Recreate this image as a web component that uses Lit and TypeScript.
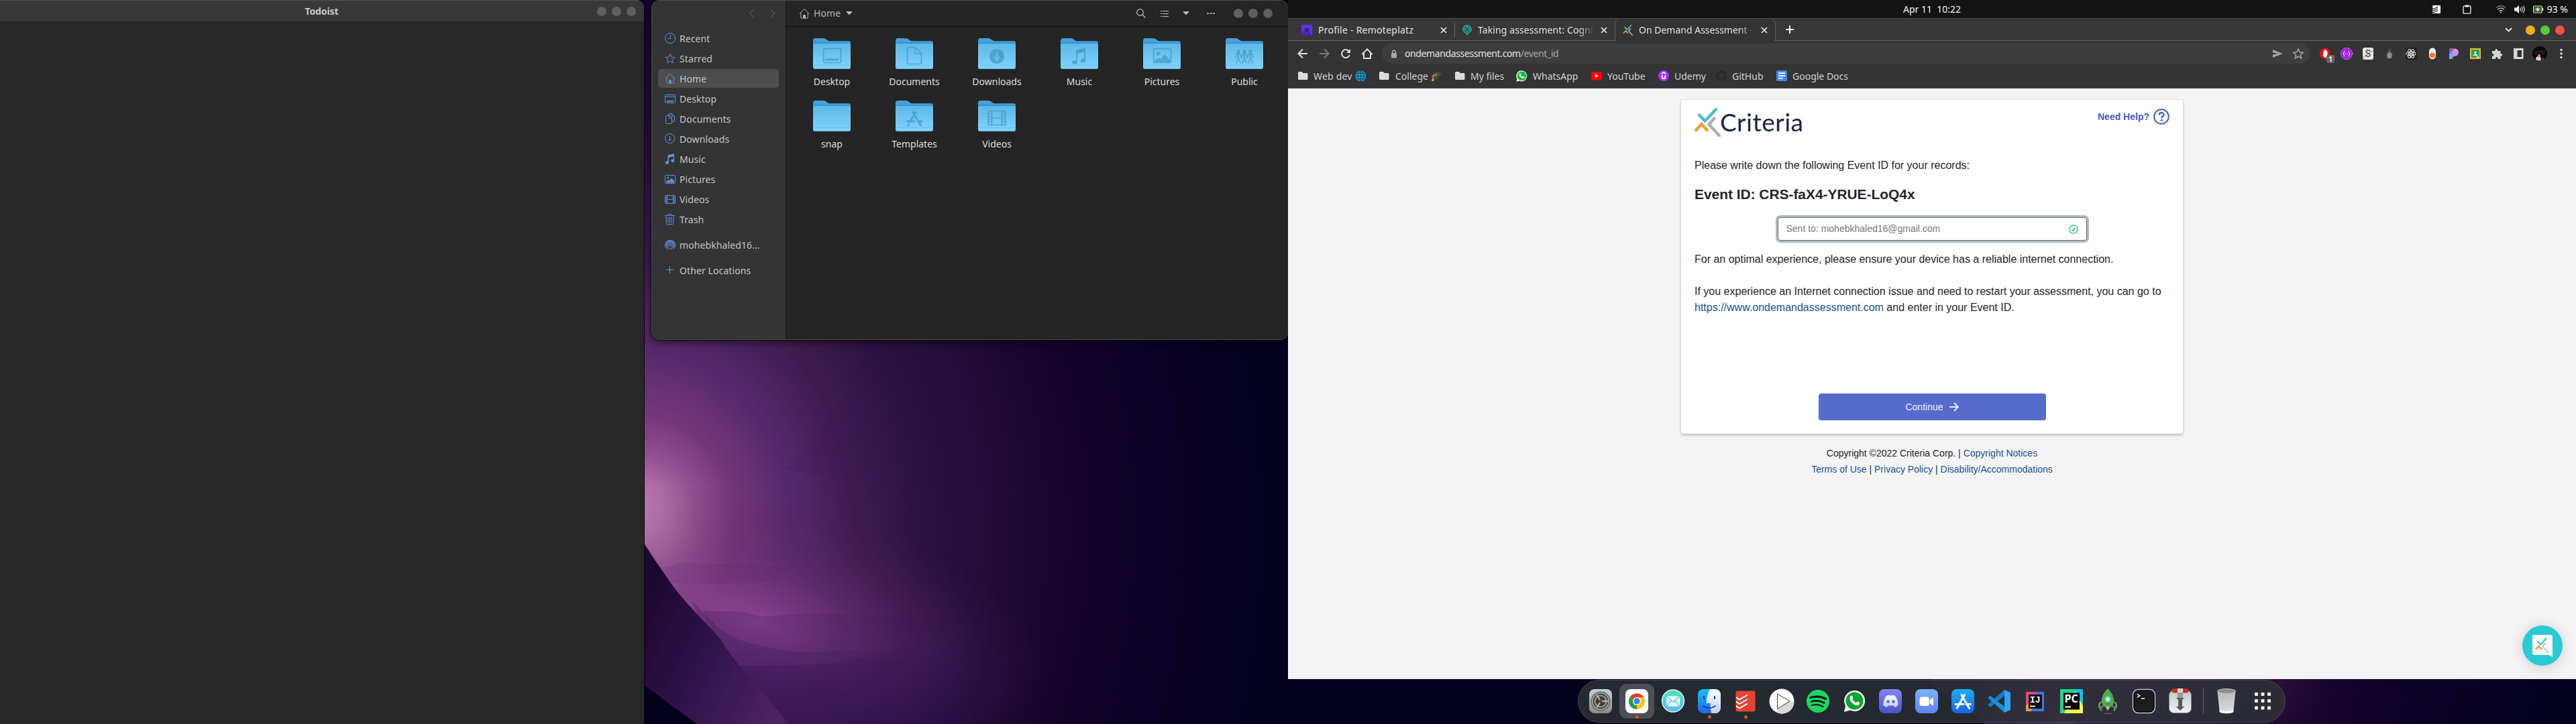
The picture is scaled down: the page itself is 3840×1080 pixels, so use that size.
import { LitElement, html, svg, css, nothing } from "lit";
import { customElement } from "lit/decorators.js";

const icon = (w: number, h: number, body: unknown, cls = "") =>
  html`<svg class="ic ${cls}" width=${w} height=${h} viewBox="0 0 ${w} ${h}" fill="none">${body}</svg>`;

const home16 = svg`<path d="M.8 8.6 8 1.3l7.2 7.3M2.8 7v7.2c0 .6.3.9.9.9h8.6c.6 0 .9-.3.9-.9V7" stroke="currentColor"/><path d="M6 15v-3.700C6 9.600 10 9.600 10 11.300V15z" fill="currentColor"/>`;

const places = [
  ["Recent", svg`<circle cx="8" cy="8" r="7.500" stroke="currentColor"/><path d="M8.500 3v5.500H4" stroke="currentColor"/>`],
  ["Starred", svg`<path d="m8 1.300 2 4.800 5 .4-3.800 3.300 1.300 5L8 12.100l-4.500 2.700 1.300-5L1 6.500l5-.4z" stroke="currentColor" stroke-linejoin="round"/>`],
  ["Home", home16],
  ["Desktop", svg`<rect x=".5" y="2.500" width="15" height="12" rx="1" stroke="currentColor"/><path d="M1 5.300h14" stroke="currentColor"/><path d="M3 12h10" stroke="currentColor" stroke-width="2"/>`],
  ["Documents", svg`<path d="M5.500 3.500v-1.500c0-.8.4-1.300 1.200-1.300h4l3.800 3.800v6.500c0 .8-.4 1.200-1.200 1.200h-2.300M10.500.7v4h4" stroke="currentColor"/><path d="M2.700 3.500h4.500l3.300 3.300v7.400c0 .8-.4 1.300-1.200 1.300H2.700c-.8 0-1.200-.5-1.200-1.300V4.800c0-.8.4-1.300 1.200-1.300zM6.800 3.500v3.700h3.700" stroke="currentColor"/>`],
  ["Downloads", svg`<circle cx="7.500" cy="7.500" r="7" stroke="currentColor"/><path d="M7.500 4v7M5 8.500 7.500 11 10 8.500" stroke="currentColor"/>`],
  ["Music", svg`<path d="M4.500 2.500 14 0v11.200a2.300 2.300 0 1 1-1.300-2.300V4.300L6 6v7.300a2.500 2.500 0 1 1-1.500-2.200z" fill="currentColor"/>`],
  ["Pictures", svg`<rect x=".5" y="2.500" width="15" height="12" rx="1" stroke="currentColor"/><circle cx="4.700" cy="6" r="1.400" fill="currentColor"/><path d="M2 13.500v-1.500l3-2.500 1.500 1 3.500-4 4 4.500v2.500z" fill="currentColor"/>`],
  ["Videos", svg`<rect x=".5" y="2.500" width="15" height="12" rx="1" stroke="currentColor"/><path d="M3.500 2.500v12M12.500 2.500v12M3.500 8.500h9M.5 5h3M.5 7.500h3M.5 10h3M.5 12.500h3M12.500 5h3M12.500 7.500h3M12.500 10h3M12.500 12.500h3" stroke="currentColor"/>`],
  ["Trash", svg`<path d="M0 2.500h15M5.500 2.500v-2h4v2M1.800 3l.5 11c0 .9.5 1.500 1.400 1.500h7.600c.9 0 1.400-.6 1.400-1.500l.5-11M5 5v8M7.500 5v8M10 5v8" stroke="currentColor"/>`],
] as const;

const glyph = "#2b86b3";
const folders: [string, unknown][] = [
  ["Desktop", svg`<rect x="15.500" y="15.500" width="26" height="21" rx="2.500"/><path d="M19 32h18" stroke-width="3"/>`],
  ["Documents", svg`<path d="M20 13.700h9.500l9 9V35.500a3 3 0 0 1-3 3H20a2.500 2.500 0 0 1-2.500-2.500V16.200a2.500 2.500 0 0 1 2.500-2.500zM29 14v6.500q0 2.500 2.500 2.500H38.500"/>`],
  ["Downloads", svg`<circle cx="28" cy="27" r="11" fill=${glyph} stroke="none"/><path d="M28 21v11M24 28.500l4 4 4-4" stroke="#74c8f4"/>`],
  ["Music", svg`<path d="M24 36V19l12-3v17" stroke-width="2"/><path d="M24 18l12-3v5l-12 3z" fill=${glyph} stroke="none"/><ellipse cx="21" cy="36" rx="4" ry="3" fill=${glyph} stroke="none"/><ellipse cx="33.500" cy="33.500" rx="4" ry="3" fill=${glyph} stroke="none"/>`],
  ["Pictures", svg`<rect x="15.500" y="15.500" width="26" height="21" rx="2.500"/><circle cx="22.500" cy="23" r="2.700" fill=${glyph} stroke="none"/><path d="M17 36v-3l6-4 3 2 6-7 9 9v3z" fill=${glyph} stroke="none"/>`],
  ["Public", svg`<g fill=${glyph} stroke="none"><circle cx="19" cy="19.500" r="2.500"/><circle cx="28" cy="19.500" r="2.500"/><circle cx="37" cy="19.500" r="2.500"/></g><path d="M19 22v7l-3 8M19 29l3 8M28 22v7l-3 8M28 29l3 8M37 22v7l-3 8M37 29l3 8M15 29l2-6h4l2.500 6 2.500-6h4l2.500 6 2.500-6h4l2 6" stroke-width="1.800"/>`],
  ["snap", nothing],
  ["Templates", svg`<path d="M30 17.500 21.500 32M26 17.500 37.500 37M17.500 31h11M33 31h6M20 35.500l-1 2" stroke-width="3"/>`],
  ["Videos", svg`<rect x="15" y="15.500" width="26" height="21" rx="2.500"/><path d="M20.500 15.500v21M35.500 15.500v21M20.500 26h15M15 19.500h5M15 23.500h5M15 27.500h5M15 31.500h5M36 19.500h5M36 23.500h5M36 27.500h5M36 31.500h5"/>`],
];

const mark = (w: number, h: number, gray = "#adafad") => html`<svg class="ic" width=${w} height=${h} viewBox="0 0 40 43" fill="none" stroke-linecap="round" stroke-width="4.400">
  <path d="M37 41.500 21.500 24.500 29.500 15.500" stroke=${gray}/>
  <path d="M7 10.500 15.500 19.500 32 2" stroke="#4cc0c4"/>
  <path d="M2.300 33 10.500 24 18.500 33" stroke="#f09c33"/></svg>`;

const wa = (bg: string, rim: string, size: number) => html`<svg class="ic" width=${size} height=${size} viewBox="0 0 16 16">
  <path d="M8 .3a7.600 7.600 0 0 0-6.600 11.500L.3 15.700l4-1A7.600 7.600 0 1 0 8 .3z" fill=${rim}/><circle cx="8" cy="7.900" r="6.400" fill=${bg}/>
  <path d="M5.400 4.200c.5-.5.9-.3 1.100.1l.5 1.200c.1.400-.7.900-.5 1.200.6 1.100 1.400 1.900 2.600 2.400.4.100.8-1 1.200-.8l1.300.7c.6.400-.2 2-1.300 2.200-2.500.4-6.200-3-5.900-5.500.1-.6.500-1.100 1-1.500z" fill="#fff"/></svg>`;

const wallpaper = (id: string) => html`<svg class="wall" width="1920" height="1080" viewBox="0 0 1920 1080">
  <defs>
    <radialGradient id="g${id}" gradientUnits="userSpaceOnUse" cx="0" cy="0" r="1" gradientTransform="translate(950 790) scale(960 1130)">
      <stop offset="0" stop-color="#ca92c2"/><stop offset=".05" stop-color="#b877ae"/><stop offset=".1" stop-color="#91508f"/><stop offset=".15" stop-color="#743878"/>
      <stop offset=".24" stop-color="#55286a"/><stop offset=".34" stop-color="#3d1b4e"/><stop offset=".44" stop-color="#2d1142"/><stop offset=".57" stop-color="#1e0a35"/>
      <stop offset=".68" stop-color="#15042b"/><stop offset=".82" stop-color="#0a0226"/><stop offset="1" stop-color="#03001d"/>
    </radialGradient>
    <radialGradient id="l${id}" gradientUnits="userSpaceOnUse" cx="0" cy="0" r="1" gradientTransform="translate(1130 930) rotate(12) scale(440 190)">
      <stop offset="0" stop-color="#9a4c9c" stop-opacity=".75"/><stop offset=".5" stop-color="#6b3070" stop-opacity=".4"/><stop offset="1" stop-color="#4a1c50" stop-opacity="0"/>
    </radialGradient>
    <linearGradient id="s${id}" gradientUnits="userSpaceOnUse" x1="1000" x2="1560" y1="0" y2="0"><stop offset="0" stop-color="#2c1050" stop-opacity=".32"/><stop offset="1" stop-color="#2c1050" stop-opacity="0"/></linearGradient>
    <linearGradient id="h${id}" gradientUnits="userSpaceOnUse" x1="960" x2="1180" y1="900" y2="1000"><stop offset="0" stop-color="#1c0730"/><stop offset=".5" stop-color="#30134a"/><stop offset="1" stop-color="#4c2260"/></linearGradient>
  </defs>
  <rect width="1920" height="1080" fill="url(#g${id})"/>
  <rect width="1920" height="1080" fill="url(#l${id})"/>
  <path d="M1291 500C1275 590 1225 640 1170 700L1500 760 1700 500z" fill="url(#s${id})" opacity=".5"/>
  <path d="M985 847c15-1 22-9 40-8 40 4 90 0 150 8l-20 22c-50 0-80 5-155 0z" fill="url(#s${id})" opacity=".3"/>
  <path d="M1048 911c20 2 40 0 60 2 20 3 15 9 55 5 60-6 110 0 160 2 60 4 120 12 180 10v150H1100z" fill="url(#s${id})" opacity=".8"/>
  <path d="M1030 895C1070 935 1080 952 1130 962 1190 975 1190 975 1240 971 1310 970 1350 971 1390 970 1420 966 1440 960 1500 968V1080H1120z" fill="url(#s${id})" opacity=".9"/>
  <path d="M1090 993C1210 993 1230 992 1270 983 1310 978 1330 982 1350 988 1390 1002 1400 990 1450 1015V1080H1130z" fill="url(#s${id})"/>
  <path d="M0 810H960C975 835 985 847 1000 870 1030 910 1050 925 1075 955 1100 995 1115 1005 1125 1017 1150 1050 1160 1060 1176 1080H0z" fill="url(#h${id})"/>
  <path d="M0 700H960V1022L1039 1080H0z" fill="#03001c"/>
</svg>`;

const bookmarkFolder = icon(15, 12, svg`<path d="M0 1.500Q0 0 1.500 0H6l1.500 2H13Q14.500 2 14.500 3.500V10.500Q14.500 12 13 12H1.500Q0 12 0 10.500z" fill="#dcdcdc"/>`);
const globe = icon(17, 17, svg`<circle cx="8.500" cy="8.500" r="8" fill="#0aa2e0"/><path d="M8.500.5v16M.5 8.500h16M2 4.300h13M2 12.700h13M8.500.5C2.500 5 2.500 12 8.500 16.500 14.500 12 14.500 5 8.500.5" stroke="#24414c" stroke-width="1"/>`);
const cap = icon(18, 18, svg`<path d="m1 9 8-6 8 3-7 7z" fill="#50504e"/><path d="M5 11v4c3 1 5 0 6-2v-3" fill="#454542"/><path d="M10 7 4 9.500v6" stroke="#e2a21c" stroke-width="1.300"/><path d="M3 13h2.500v4H2z" fill="#e2a21c"/>`);

const bookmarks: [string, unknown, string, unknown][] = [
  ["Web dev", bookmarkFolder, "w1", globe],
  ["College", bookmarkFolder, "w2", cap],
  ["My files", bookmarkFolder, "w3", nothing],
  ["WhatsApp", wa("#0fbf3c", "#f4f4f4", 17), "w4", nothing],
  ["YouTube", icon(16, 16, svg`<rect y="2" width="16" height="12.500" rx="3" fill="#f00"/><path d="M6.200 5.500v5.300l4.500-2.600z" fill="#fff"/>`), "w5", nothing],
  ["Udemy", icon(16, 16, svg`<circle cx="8" cy="8" r="8" fill="#a435f0"/><path d="M5 4.800 8 3l3 1.800M5.700 7v3c0 3 4.600 3 4.600 0V7" stroke="#fff" stroke-width="1.800"/>`), "w6", nothing],
  ["GitHub", icon(16, 16, svg`<path d="M8 .5a7.500 7.500 0 0 0-2.400 14.600c.4.100.5-.2.500-.4v-1.500c-2 .5-2.500-.9-2.500-.9-.3-.8-.8-1-.8-1-.7-.5 0-.5 0-.5.800 0 1.200.8 1.200.8.700 1.200 1.800.8 2.200.6 0-.5.200-.8.500-1-1.700-.2-3.400-.8-3.400-3.700 0-.8.300-1.500.8-2-.1-.2-.3-1 .1-2 0 0 .6-.2 2 .8a7 7 0 0 1 3.700 0c1.400-1 2-.8 2-.8.4 1 .2 1.800.1 2 .5.500.8 1.200.8 2 0 2.900-1.700 3.500-3.400 3.700.3.200.5.700.5 1.400v2.100c0 .2.100.5.500.4A7.500 7.500 0 0 0 8 .5z" fill="#24292e"/>`), "w7", nothing],
  ["Google Docs", icon(16, 16, svg`<rect width="16" height="16" rx="1.500" fill="#4285f4"/><path d="M3 4.200h10M3 8h10M3 11.800h6.500" stroke="#fff" stroke-width="1.800"/>`), "w8", nothing],
];

const closeX = icon(10, 10, svg`<path d="m1 1 8 8M9 1 1 9" stroke="#e8e8e8" stroke-width="1.700"/>`, "close");

const extensions = [
  icon(18, 18, svg`<path d="M5.500 1h7L17 5.500v7L12.500 17h-7L1 12.500v-7z" fill="#e40d0d"/><path d="M5.500 9.500 6.500 9V5h1.200V3.500H9V3h1.200v1h1.300v1.500h1V11c0 3-2 4-3.500 4-2 0-2.500-2-3.500-5.500z" fill="#fff"/>`),
  icon(18, 18, svg`<circle cx="9" cy="9" r="8.500" fill="#a21fe8" stroke="#d6a0f5" stroke-dasharray="2 1"/><path d="M6.500 5C4.500 5 6 8.500 4 9c2 .5.500 4 2.500 4M11.500 5c2 0 .5 3.500 2.500 4-2 .5-.5 4-2.500 4" stroke="#fff"/><path d="M7 9h1M10 9h1" stroke="#fff" stroke-width="1.500"/>`),
  icon(18, 18, svg`<rect x="1" width="16" height="18" rx="3" fill="#e6e6e6"/><path d="m17 5-16 12v-3L17 3z" fill="#bdbdbd"/><text x="9" y="14" text-anchor="middle" font-family="Roboto, sans-serif" font-size="14" fill="#3a3a3a">S</text>`),
  icon(18, 18, svg`<path d="M3 6l3 2M15 6l-3 2M2 11h4M16 11h-4M4 16l2-2M14 16l-2-2" stroke="#4a4a4a"/><circle cx="9" cy="5" r="2.500" fill="#545454"/><rect x="5.500" y="7" width="7" height="9.500" rx="3.500" fill="#8d8d8d"/>`),
  icon(18, 18, svg`<rect x="1" width="17" height="18" fill="#222"/><g stroke="#eee" stroke-width="1.100"><ellipse cx="9" cy="9" rx="7" ry="2.800"/><ellipse cx="9" cy="9" rx="7" ry="2.800" transform="rotate(60 9 9)"/><ellipse cx="9" cy="9" rx="7" ry="2.800" transform="rotate(120 9 9)"/></g><circle cx="9" cy="9" r="1.500" fill="#eee"/>`),
  icon(18, 18, svg`<rect x="4" y=".5" width="10" height="17" rx="5" fill="#eceff0"/><circle cx="9" cy="11.500" r="4" fill="#f47b2a"/>`),
  html`<svg class="ic" width="18" height="18" viewBox="0 0 18 18"><defs><linearGradient id="pp" x1="0" y1="1" x2="1" y2="0"><stop offset="0" stop-color="#6aa4ff"/><stop offset=".5" stop-color="#b58af5"/><stop offset="1" stop-color="#f79ad0"/></linearGradient></defs><path d="M2 17V9L9.500 1.500C18 1 18 13 10 13c-2.500 0-3 1-3 4z" fill="url(#pp)"/><path d="M2 4 5 1M2 7l6-6" stroke="#c08fe8" stroke-width="1.100"/></svg>`,
  icon(18, 18, svg`<rect x="1" y="1" width="16" height="16" fill="#f3b920"/><rect x="3" y="3" width="12" height="12" fill="#20a464"/><circle cx="9" cy="7.300" r="1.600" fill="#fff"/><path d="M5.500 12c0-3.500 7-3.500 7 0z" fill="#e2f4ea"/><path d="M10.500 13.500h3.500V15h-3.500z" fill="#fff"/>`),
  icon(18, 18, svg`<path d="M2 5h4.500C6 1 10.500 1 10 5h4.500v4C18 8.500 18 13 14.500 12.500V17H10.500C11 13 6.500 13 7 17H2v-4.500c3.500.5 3.500-4 0-3.500z" fill="#d6d6d6"/>`),
  icon(18, 18, svg`<rect x="2" y="1" width="14.500" height="16" fill="#d8d8d8"/><rect x="7.500" y="4" width="6.500" height="10" fill="#333"/>`),
];

const ln = (id: string, a: string, b: string) => svg`<linearGradient id=${id} x1="0" x2="0" y1="0" y2="1"><stop offset="0" stop-color=${a}/><stop offset="1" stop-color=${b}/></linearGradient>`;
const tile = (f: string) => svg`<rect x="2" y="1" width="34" height="36" rx="8" fill=${f}/>`;
const dockIcons: { body: unknown; run?: boolean; active?: boolean }[] = [
  { body: svg`${ln("d1", "#c6d3da", "#8d8a86")}${tile("url(#d1)")}<circle cx="19" cy="19" r="14.500" fill="#3c3b3a"/><circle cx="19" cy="19" r="12.300" stroke="#a9a9a6" stroke-width="1.800"/><circle cx="19" cy="19" r="8.500" stroke="#908e8b" stroke-width="2.500"/><circle cx="19" cy="19" r="14" stroke="#bbb" stroke-width="1" stroke-dasharray="1 1.200"/><path d="M19 19h11M19 19 13.500 9.500M19 19l-5.500 9.500" stroke="#b4b2af" stroke-width="2.300"/><circle cx="19" cy="19" r="2.500" fill="#4c4b4a"/>` },
  { active: true, run: true, body: svg`${tile("#fdfdfe")}<path d="M19 19 8.700 13A12 12 0 0 1 29.300 13z" fill="#e33b2e"/><path d="M19 19 29.300 13A12 12 0 0 1 19 31z" fill="#fcc60e"/><path d="M19 19v12A12 12 0 0 1 8.700 13z" fill="#2c9b47"/><path d="M19 13h10.500a12 12 0 0 1-10.500 18l5-9z" fill="#fcc60e"/><path d="M8.700 13 14 22l5 3-3.500 5.500A12 12 0 0 1 8.700 13z" fill="#2c9b47"/><circle cx="19" cy="19" r="6" fill="#fff"/><circle cx="19" cy="19" r="4.700" fill="#3f86ee"/>` },
  { body: svg`${ln("d3", "#4be8b8", "#58b8f4")}<circle cx="19" cy="18.500" r="16.500" fill="url(#d3)" stroke="#e9fbfa" stroke-width="1.300"/><rect x="9.500" y="11.500" width="19.500" height="15" rx="1.500" fill="#f4fdff"/><path d="m10 12 9.200 8 9.300-8M10 26.300l6.500-8M28.500 26.300l-6.500-8" stroke="#55ccd8" stroke-width="1.500"/>` },
  { run: true, body: svg`${ln("d4", "#13c3f8", "#1a65e8")}${ln("d5", "#fafdff", "#bcd3fb")}${tile("url(#d4)")}<path d="M20 1h8a8 8 0 0 1 8 8v20a8 8 0 0 1-8 8h-6c-1-4-1.500-9-1.300-15h-6C15 14 17 6 20 1z" fill="url(#d5)"/><path d="M11 12v3M27 12v3" stroke="#17375e" stroke-width="2" stroke-linecap="round"/><path d="M10 26c5 4 13 4 18 0" stroke="#17375e" stroke-width="1.600" stroke-linecap="round"/>` },
  { run: true, body: svg`<rect x="4.500" y="3.500" width="29" height="31" rx="3" fill="#e44232"/><path d="m5 13 5 3.500 12-7M5 19.500 10 23l12-7M5 26l5 3.500 12-7" stroke="#fff" stroke-width="2"/>` },
  { body: svg`<circle cx="19" cy="19" r="18.500" fill="#fff"/><path d="M31 19 12.500 31l1 5.500C25 41 38 32 37 20z" fill="#d9d9d9"/><path d="M12.500 8v22.500L31 19z" fill="#fff" stroke="#333" stroke-width="1"/>` },
  { body: svg`<circle cx="19" cy="19" r="17" fill="#1fd760"/><path d="M8 13.500c8-2.500 16-1.500 22.500 2" stroke="#141a17" stroke-width="3.200" stroke-linecap="round"/><path d="M9.300 19.500c7-2 13.500-1 19 2" stroke="#141a17" stroke-width="2.700" stroke-linecap="round"/><path d="M10 25c6-1.500 11.500-1 16.500 2" stroke="#141a17" stroke-width="2.200" stroke-linecap="round"/>` },
  { body: svg`<path d="M19.500 3A15.500 15.500 0 0 0 6 26L4 35l9-2.500A15.500 15.500 0 1 0 19.500 3z" fill="#f1f4f2"/><circle cx="19.500" cy="18.500" r="13" fill="#0aa52b"/><path d="M14 11c1-1 2-.6 2.400.3l1 2.400c.4.900-1.300 1.900-.9 2.600 1.200 2.200 3 3.800 5.200 4.700.9.300 1.700-2 2.600-1.500l2.600 1.400c1.300.8-.4 4-2.600 4.400-5 .8-12.500-6-12-11 .2-1.300.8-2.500 1.700-3.300z" fill="#fff"/>` },
  { body: svg`${ln("d9", "#8287fa", "#4a51c6")}${ln("d9b", "#ffffff", "#c4cafb")}${tile("url(#d9)")}<path d="M13 11c2-1 3.500-1.300 4.500-1.300l.5 1h3l.5-1c1 0 2.500.3 4.500 1.300 3 4 5 9 4.500 14-2 2-4 2.700-5.500 3l-1.200-2.500h-8.600L14 28c-1.500-.3-3.500-1-5.500-3-.5-5 1.500-10 4.500-14z" fill="url(#d9b)"/><ellipse cx="15.500" cy="19.500" rx="2.200" ry="2.500" fill="#6369de"/><ellipse cx="23.500" cy="19.500" rx="2.200" ry="2.500" fill="#6369de"/>` },
  { body: svg`${ln("d10", "#7cb0fb", "#5e86f0")}${tile("url(#d10)")}<rect x="8.500" y="12.500" width="14.500" height="13.500" rx="3.500" fill="#fff"/><path d="m24 17 5-4v13l-5-4z" fill="#fff"/>` },
  { body: svg`${ln("d11", "#18b0f6", "#1a62e4")}${tile("url(#d11)")}<path d="M21.500 9.500 12 26.500M17 9.500l11.500 20M8 23.500h12M24 23.500h6.500M11 27.500l-1 2" stroke="#fff" stroke-width="3" stroke-linecap="round"/>` },
  { body: svg`<path d="M27 2 36 6v26l-9 4z" fill="#2ea3ee"/><path d="M27 2v9L6 28l-4-4z" fill="#0f7cc4"/><path d="M27 36v-9L6 11 2 14z" fill="#1a8fdc"/>` },
  { body: svg`<path d="M5 5h27v29H5z" fill="#3c76d9"/><path d="M5 5h14L10 34H5z" fill="#f5476f"/><path d="M5 24l7 0 2 10H5z" fill="#f29443"/><path d="M14 5h9l-4 5H9z" fill="#d044b0"/><rect x="9" y="9" width="20" height="21" fill="#111"/><text x="11" y="21" font-family="Liberation Mono, monospace" font-weight="700" font-size="13" fill="#fff">IJ</text><path d="M11 26.500h8" stroke="#fff" stroke-width="1.800"/>` },
  { body: svg`<path d="M2 1h34v36H2z" fill="#21d789"/><path d="M22 1h14v26z" fill="#07c3f2"/><path d="m24 4 12 22v11H8z" fill="#fcf84a"/><path d="M26 1h10v24z" fill="#0cc3ea"/><rect x="7" y="6.500" width="24" height="25" fill="#0b0b0b"/><text x="8.500" y="20.500" font-family="Open Sans, sans-serif" font-weight="700" font-size="16" fill="#fff">PC</text><path d="M9.500 27.500H18" stroke="#fff" stroke-width="2"/>` },
  { body: svg`<path d="M9 20c-5 5-3 9 1 12M29 20c5 5 3 9-1 12" stroke="#a59873" stroke-width="2"/><path d="M19 0C12 7 9.500 14 9.500 20l3 7h13l3-7C28.500 14 26 7 19 0z" fill="#4bab52"/><path d="M12 27c-5 0-5 4-2 6M26 27c5 0 5 4 2 6" stroke="#3da048" stroke-width="2.500"/><path d="M15 27h8l-4 6z" fill="#c9b583"/><circle cx="19" cy="16" r="4.500" fill="#7fd9b4"/><circle cx="19" cy="16" r="2.500" fill="#d4f7e6"/><path d="M16 23h6" stroke="#2d7d3c"/><ellipse cx="19" cy="37.500" rx="7" ry=".8" fill="#696570"/>` },
  { body: svg`<rect x="2.500" y="1.500" width="33" height="35" rx="8" fill="#1c1c1c" stroke="#c2cad0" stroke-width="1.400"/><rect x="4.200" y="3.200" width="29.600" height="31.600" rx="6.500" stroke="#000"/><path d="m9 8.500 3.500 2.500L9 13.500M15 15h5" stroke="#fff" stroke-width="1.500"/>` },
  { body: svg`${ln("d17", "#c3c9cf", "#f1f3f4")}<rect x="2.500" y="3" width="33" height="33.500" rx="7" fill="url(#d17)" stroke="#7c8790" stroke-width="1"/><rect x="6.500" y="0" width="25" height="6.500" rx="3" fill="#cc2a1c"/><rect x="15" y="0" width="8" height="7" fill="#d8d8d8"/><path d="M15.500 6.500h7V14h2.500l-3 3v10h3.500l-6.500 6-6.500-6h3.500V17l-3-3h2.500z" fill="#5a5a5a"/><path d="M15.500 6.500h7V14h-7z" fill="#9c9c9c"/>` },
];
const trashIcon = icon(38, 38, svg`${ln("d18", "#b9b9bb", "#dedfe2")}<path d="M5.500 4h27L29.300 34.500c-.2 3-20.300 3-20.600 0z" fill="url(#d18)"/><path d="M8.500 31.500c4 3 17 3 21 0l-.4 3.500c-1 3-19.200 3-20.200 0z" fill="#f5f5f6"/><ellipse cx="19" cy="4" rx="13.500" ry="3.500" fill="#8d8c8e" stroke="#c2c2c4"/>`);
const gridIcon = icon(38, 38, svg`${[7, 16.5, 26].map((x) => [6, 16, 26.500].map((y) => svg`<rect x=${x} y=${y} width="5" height="5" rx=".8" fill="#f1f0f3"/>`))}`);

const base = css`
  :host { display: block; box-sizing: border-box; font-family: "Noto Sans", "Open Sans", sans-serif; font-size: 14px; }
  * { box-sizing: border-box; }
  .ic { display: block; flex: none; }
  .dot { width: 14px; height: 14px; border-radius: 50%; background: #5f5f5f; }
`;

@customElement("todoist-window")
class TodoistWindow extends LitElement {
  static styles = [base, css`
    :host { height: 1080px; background: #272727; border-top-right-radius: 12px; border-right: 1px solid #0a0a0a; overflow: hidden; }
    .bar { display: grid; grid-template-columns: 1fr auto 1fr; align-items: center; height: 32px; background: #373737; border-top: 1px solid #4d4d4d; padding-right: 12px; }
    .title { grid-column: 2; font-weight: 700; color: #c9c9c9; padding-left: 11px; line-height: 29px; letter-spacing: -0.1px; }
    .dots { display: flex; justify-content: flex-end; gap: 8px; }
  `];
  render() {
    return html`<div class="bar"><span class="title">Todoist</span><span class="dots"><i class="dot"></i><i class="dot"></i><i class="dot"></i></span></div>`;
  }
}

@customElement("files-window")
class FilesWindow extends LitElement {
  static styles = [base, css`
    :host { display: flex; height: 507px; border-radius: 12px; overflow: hidden; background: #242424; color: #c4c4c4; border: 1px solid #4a4a4a; border-right: 0; box-shadow: 0 0 0 1px #0c0a10, 0 4px 12px rgba(0,0,0,.5); }
    .side { width: 200px; background: #333; border-right: 1px solid #111; padding: 0 10px 0 9px; flex: none; }
    .nav { height: 42px; display: flex; justify-content: flex-end; align-items: center; gap: 24px; padding: 0 5px 4px 0; color: #6a6a6a; }
    .item { display: flex; align-items: center; gap: 6px; height: 28px; margin-bottom: 2px; padding-left: 10px; border-radius: 5px; white-space: nowrap; letter-spacing: 0.1px; }
    .item.on { background: #4d4d4d; }
    .item .ic { color: #5f90e0; }
    .gap { margin-top: 10px; }
    .main { flex: 1; }
    .head { height: 39px; border-bottom: 1px solid #0e0e0e; display: flex; align-items: center; padding: 0 23px 0 19px; color: #b4b4b4; }
    .path { margin: 0 8px 0 6px; line-height: 36px; letter-spacing: 0.1px; }
    .tools { margin-left: auto; display: flex; align-items: center; }
    .tools .search { margin-right: 21px; }
    .tools .list { margin-right: 20px; }
    .tools .more { margin: 0 27px 0 25px; }
    .dots { display: flex; gap: 8px; }
    .grid { display: grid; grid-template-columns: repeat(6, 123px); grid-auto-rows: 93px; padding: 17px 0 0 6.500px; }
    .cell { display: flex; flex-direction: column; align-items: center; color: #dedede; }
    .name { margin-top: 9px; line-height: 20px; }
  `];
  render() {
    const caret = icon(10, 6, svg`<path d="M0 0h10L5 5.500z" fill="#bdbdbd"/>`);
    return html`
      <div class="side">
        <div class="nav">${icon(8, 14, svg`<path d="M7.500 1 1.500 7l6 6" stroke="currentColor"/>`)}${icon(8, 14, svg`<path d="m.5 1 6 6-6 6" stroke="currentColor"/>`)}</div>
        ${places.map(([n, b]) => html`<div class="item ${n === "Home" ? "on" : ""}">${icon(16, 16, b)}<span>${n}</span></div>`)}
        <div class="item gap">${icon(16, 16, svg`<g stroke="currentColor" stroke-width="1.200"><path d="M3.500 14.500a7.400 7.400 0 1 1 9 0M5 12.800a5.500 5.500 0 1 1 6 0M6 10.800a3.500 3.500 0 1 1 4 0"/><circle cx="8" cy="8" r="1.300"/><path d="M6.500 15v-2.500M9.500 15v-2.500"/></g>`)}<span>mohebkhaled16…</span></div>
        <div class="item gap">${icon(16, 16, svg`<path d="M7.500 2v11M2 7.500h11" stroke="currentColor"/>`)}<span>Other Locations</span></div>
      </div>
      <div class="main">
        <div class="head">${icon(16, 16, home16)}<span class="path">Home</span>${caret}
          <div class="tools">
            ${icon(14, 14, svg`<circle cx="5.500" cy="5.500" r="4.800" stroke="#bdbdbd" stroke-width="1.200"/><path d="m9 9 4.500 4.500" stroke="#bdbdbd" stroke-width="1.200"/>`, "search")}
            ${icon(14, 11, svg`<path d="M4 1.500h9M4 5.500h9M4 9.500h9" stroke="#bdbdbd"/><path d="M1 1.500h2M1 5.500h2M1 9.500h2" stroke="#bdbdbd"/>`, "list")}
            ${caret}
            ${icon(14, 4, svg`<path d="M1 2h3M5.500 2h3M10 2h3" stroke="#9c9c9c" stroke-width="2"/>`, "more")}
            <span class="dots"><i class="dot"></i><i class="dot"></i><i class="dot"></i></span>
          </div>
        </div>
        <div class="grid">
          ${folders.map(([n, g]) => html`<div class="cell">
            <svg class="ic" width="56" height="46" viewBox="0 0 56 46"><defs><linearGradient id="f" x1="0" x2="0" y1="0" y2="1"><stop offset="0" stop-color="#5ab9ea"/><stop offset="1" stop-color="#84d3fc"/></linearGradient></defs>
              <path d="M0 3.500Q0 0 3.500 0H15Q18 0 20 2L22 3.500Q23 4.300 25 4.300H53Q56 4.300 56 7.500V20H0z" fill="#469fd8"/><path d="M2 6.500H54Q56 6.500 56 9H0Q0 6.500 2 6.500z" fill="#3a8dc4"/>
              <path d="M0 10.500Q0 8 2.500 8H53.500Q56 8 56 10.500V43Q56 46 53 46H3Q0 46 0 43z" fill="url(#f)"/><path d="M0 40.500h56" stroke="#67bde8" stroke-width=".8"/><path d="M.5 43Q.8 45.500 3 45.500H53Q55.200 45.500 55.500 43" fill="none" stroke="#5cb9e6"/>
              <g fill="none" stroke=${glyph} stroke-width="1.700" stroke-linecap="round" opacity=".5">${g}</g></svg>
            <span class="name">${n}</span></div>`)}
        </div>
      </div>`;
  }
}

@customElement("browser-window")
class BrowserWindow extends LitElement {
  static styles = [base, css`
    :host { display: flex; flex-direction: column; height: 986px; background: #333; color: #e2e2e2; }
    .strip { height: 34px; background: #373737; border-top: 1px solid #505050; border-bottom: 1px solid #636363; display: flex; }
    .tab { display: flex; align-items: center; height: 33px; white-space: nowrap; line-height: 33px; flex: none; }
    .fade { -webkit-mask-image: linear-gradient(90deg, #000 86%, transparent); mask-image: linear-gradient(90deg, #000 86%, transparent); }
    .t1 { width: 249px; padding-left: 20px; letter-spacing: 0.25px; }
    .t1 .label { width: 183px; margin-left: 9px; }
    .t1::after { content: ""; width: 1px; height: 21px; background: #6b6b6b; margin-left: 11px; }
    .t2 { width: 238px; padding-left: 10px; }
    .t2 .label { width: 175px; margin-left: 8px; margin-right: 8px; letter-spacing: 0.1px; }
    .t3 { width: 240px; padding-left: 11px; background: #333; border: 1px solid #636363; border-width: 0 1px; border-radius: 8px 8px 0 0; }
    .t3 .label { width: 174px; margin-left: 8px; margin-right: 8px; }
    .plus { margin: 10px 0 0 15px; }
    .win { margin-left: auto; display: flex; align-items: center; gap: 8px; padding-right: 17px; height: 33px; }
    .win .ic { margin-right: 12px; }
    .y { background: #f3ae1d; } .g { background: #57cb38; } .r { background: #ec5349; }
    .tools { height: 38px; display: flex; align-items: center; padding: 0 13px 0 14px; }
    .tools > .navs { display: flex; gap: 16px; margin-right: 14px; }
    .omni { flex: 1; height: 30px; border-radius: 15px; background: #3d3d3d; display: flex; align-items: center; padding: 0 9px 0 13px; }
    .url { margin-left: 11px; margin-right: auto; letter-spacing: -0.38px; line-height: 30px; }
    .url span { color: #a8a8a8; }
    .omni .send { margin-right: 14px; }
    .ext { display: flex; gap: 14px; margin-left: 13px; align-items: center; }
    .ext > span { position: relative; }
    .badge { position: absolute; left: 11px; top: 11px; width: 12px; height: 12px; border-radius: 2px; background: #666; color: #fff; font: 700 10px/12px "Noto Sans", sans-serif; text-align: center; }
    .avatar { margin-left: 12px; }
    .menu { margin-left: 12px; }
    .marks { height: 33px; display: flex; align-items: center; padding: 0 0 4px 15px; color: #d2d2d2; border-bottom: 1px solid #494546; white-space: nowrap; }
    .mark { display: flex; align-items: center; flex: none; }
    .mark > span { margin: 0 4px 0 8px; }
    .w1 { width: 121px; } .w2 { width: 113px; } .w3 { width: 91px; } .w4 { width: 112px; } .w5 { width: 100px; } .w6 { width: 86px; } .w7 { width: 90px; }
    .w1 > span { letter-spacing: 0.2px; } .w2 > span { margin: 0 3px 0 9px; }
    .page { flex: 1; background: #f4f4f4; font-family: "Liberation Sans", Arial, sans-serif; font-size: 16px; color: #212529; display: flex; flex-direction: column; align-items: center; padding-top: 17px; }
    .card { width: 748px; height: 498px; background: #fff; border-radius: 3px; box-shadow: 0 2px 4px rgba(0,0,0,.24), 0 0 2px rgba(0,0,0,.14); padding: 12px 20px 20px; display: flex; flex-direction: column; line-height: 24px; }
    .top { display: flex; justify-content: space-between; align-items: flex-start; height: 74px; }
    .brand { display: flex; }
    .word { font-family: Lato, sans-serif; font-size: 37px; line-height: 41px; color: #1c2545; letter-spacing: 0.5px; margin-left: -2px; }
    .help { display: flex; align-items: center; gap: 6px; font-size: 14px; font-weight: 700; color: #4359c8; }
    .help svg { margin-top: 1px; }
    h2 { margin: 17px 0 0; font-size: 20.900px; line-height: 28px; font-weight: 700; }
    .field { width: 461px; height: 35px; margin: 20px auto 0; border: 1px solid #5f6b76; border-radius: 4px; box-shadow: 0 0 0 3px #b2b9bf; display: flex; align-items: center; justify-content: space-between; padding: 0 12px 0 12px; font-size: 14px; color: #75797e; flex: none; }
    .field span { margin-top: -2px; }
    p { margin: 0; }
    .p1 { margin-top: 16px; }
    .p2 { margin-top: 24px; }
    a { color: #115293; text-decoration: none; }
    .go { margin: auto auto 0; width: 339px; height: 40px; border-radius: 4px; background: #556ccc; color: #eef0fb; font-size: 14px; display: flex; align-items: center; justify-content: center; gap: 9px; }
    .foot { margin-top: 17px; text-align: center; font-size: 14px; line-height: 24px; }
    .chat { position: absolute; left: 3760px; top: 933px; width: 60px; height: 60px; border-radius: 50%; background: #2acbd2; display: grid; place-items: center; box-shadow: 0 2px 20px rgba(0,0,0,.16); }
    .bubble { width: 30px; height: 32px; display: grid; }
    .bubble > * { grid-area: 1 / 1; }
    .bubble .m { padding: 4px 0 0 4px; }
  `];
  render() {
    return html`
      <div class="strip">
        <div class="tab t1">${icon(16, 16, svg`<path d="M0 0h16v16h-5l-3-5v5H0z" fill="#5b2ef5"/><path d="M5 5h6v5l5 6h-5L7 10v6H0" fill="#4522b5"/><path d="M5.500 5H11v5H5.500z" fill="#36245c"/>`)}<span class="label">Profile - Remoteplatz</span>${closeX}</div>
        <div class="tab t2">${icon(16, 16, svg`<path d="M8 0a7 7 0 0 1 7 7c0 4-5 5-7 9-2-4-7-5-7-9a7 7 0 0 1 7-7z" fill="#2f9e8f"/><circle cx="8" cy="6.800" r="4.500" stroke="#1f5b55"/><path d="m5 4 6 6M11 4l-6 6" stroke="#1f4d49" stroke-width="1.300"/>`)}<span class="label fade">Taking assessment: Cogni</span>${closeX}</div>
        <div class="tab t3">${mark(16, 16)}<span class="label fade">On Demand Assessment -</span>${closeX}</div>
        ${icon(12, 12, svg`<path d="M6 0v12M0 6h12" stroke="#f4f4f4" stroke-width="2"/>`, "plus")}
        <div class="win">${icon(11, 7, svg`<path d="m1 1 4.500 4.500L10 1" stroke="#e4e4e4" stroke-width="1.800"/>`)}<i class="dot y"></i><i class="dot g"></i><i class="dot r"></i></div>
      </div>
      <div class="tools">
        <div class="navs">
          ${icon(16, 16, svg`<path d="M15 8H2M8 1.500 1.500 8 8 14.500" stroke="#e0e0e0" stroke-width="2"/>`)}
          ${icon(16, 16, svg`<path d="M1 8h13M8 1.500 14.500 8 8 14.500" stroke="#7b7b7b" stroke-width="2"/>`)}
          ${icon(16, 16, svg`<path d="M13.800 10A6 6 0 1 1 12.500 4L14 5.500" stroke="#e0e0e0" stroke-width="2"/><path d="M15 1v6H9z" fill="#e0e0e0"/>`)}
          ${icon(16, 16, svg`<path d="M.8 8.500 8 1.300l7.200 7.200H13V15H3V8.500z" stroke="#e0e0e0" stroke-width="1.900"/>`)}
        </div>
        <div class="omni">
          ${icon(10, 13, svg`<rect x="1" y="5" width="8" height="7.500" rx="1" fill="#a6a8aa"/><path d="M2.800 5.500V3.500a2.200 2.200 0 0 1 4.400 0v2" stroke="#a6a8aa" stroke-width="1.400"/>`)}
          <span class="url">ondemandassessment.com<span>/event_id</span></span>
          ${icon(16, 16, svg`<path d="m1 2 14.500 6L1 14V9.500L9 8 1 6.500z" fill="#a6a6a6"/>`, "send")}
          ${icon(18, 18, svg`<path d="m9 2 2.100 4.800 5.200.5-3.900 3.500 1.100 5.100L9 13.200l-4.500 2.700 1.100-5.100L1.700 7.300l5.200-.5z" stroke="#a6a6a6" stroke-width="1.500"/>`)}
        </div>
        <div class="ext">${extensions.map((e, i) => html`<span>${e}${i === 0 ? html`<b class="badge">1</b>` : nothing}</span>`)}</div>
        ${icon(22, 22, svg`<circle cx="11" cy="11" r="11" fill="#0b0908"/><path d="M3 8c4 1 8-1 16 0M4 11h3M14 10l4 1" stroke="#5c3f26"/><path d="M5 20c0-4 2-5 4.500-5 2.500 0 4 2.500 3 6-2.500 1-5 .5-7.500-1z" fill="#d5d2dc"/><circle cx="10" cy="14" r="2.200" fill="#b9826a"/><path d="M14 18l4-1-1 3-3 1.500z" fill="#8a3c35"/>`, "avatar")}
        ${icon(18, 18, svg`<circle cx="9" cy="3.500" r="1.700" fill="#e0e0e0"/><circle cx="9" cy="9" r="1.700" fill="#e0e0e0"/><circle cx="9" cy="14.500" r="1.700" fill="#e0e0e0"/>`, "menu")}
      </div>
      <div class="marks">${bookmarks.map(([n, i, w, after]) => html`<div class="mark ${w}">${i}<span>${n}</span>${after}</div>`)}</div>
      <div class="page">
        <div class="card">
          <div class="top">
            <div class="brand">${mark(40, 43)}<span class="word">Criteria</span></div>
            <div class="help">Need Help?${icon(24, 24, svg`<circle cx="12" cy="12" r="10.800" stroke="#4359c8" stroke-width="2"/><path d="M8.700 9.500c0-4.500 6.800-4.300 6.800-.3 0 2.500-3.300 2.500-3.300 5" stroke="#4359c8" stroke-width="2.400"/><circle cx="12.100" cy="17.300" r="1.500" fill="#4359c8"/>`)}</div>
          </div>
          <p>Please write down the following Event ID for your records:</p>
          <h2>Event ID: CRS-faX4-YRUE-LoQ4x</h2>
          <div class="field"><span>Sent to: mohebkhaled16@gmail.com</span>${icon(14, 14, svg`<circle cx="7" cy="7" r="6.200" stroke="#1fbf73" stroke-width="1.300"/><path d="m4.200 7.300 2 2 3.700-4.500" stroke="#1fbf73" stroke-width="1.500"/>`)}</div>
          <p class="p1">For an optimal experience, please ensure your device has a reliable internet connection.</p>
          <p class="p2">If you experience an Internet connection issue and need to restart your assessment, you can go to <a>https://www.ondemandassessment.com</a> and enter in your Event ID.</p>
          <div class="go">Continue${icon(14, 14, svg`<path d="M0 7h12.500M7 1l6 6-6 6" stroke="#eef0fb" stroke-width="1.800"/>`)}</div>
        </div>
        <div class="foot">Copyright ©2022 Criteria Corp. | <a>Copyright Notices</a><br /><a>Terms of Use</a> | <a>Privacy Policy</a> | <a>Disability/Accommodations</a></div>
      </div>
      <div class="chat"><div class="bubble">${icon(30, 33, svg`<path d="M3 0h24q3 0 3 3v30l-5-3H3q-3 0-3-3V3q0-3 3-3z" fill="#fff"/>`)}<span class="m">${mark(21, 23, "#c6c6c6")}</span></div></div>`;
  }
}

@customElement("dock-bar")
class DockBar extends LitElement {
  static styles = [base, css`
    :host { width: 1055px; height: 64px; border-radius: 32px; background: rgba(44, 50, 52, .82); border: 1px solid #48484a; display: flex; align-items: center; padding: 0 6px 0 6px; }
    .slot { width: 54px; height: 52px; display: grid; place-items: center; position: relative; flex: none; }
    .active { width: 52px; margin: 0 1px; background: rgba(120, 120, 124, .48); border-radius: 11px; }
    .run { position: absolute; left: 50%; margin-left: -2.500px; bottom: 0; width: 5px; height: 5px; border-radius: 50%; background: #e2501c; }
    .sep { width: 1px; height: 38px; margin: 0 7px; background: #66666c; }
  `];
  render() {
    return html`${dockIcons.map((d) => html`<div class="slot ${d.active ? "active" : ""}">${icon(38, 38, d.body)}${d.run ? html`<i class="run"></i>` : nothing}</div>`)}
      <i class="sep"></i><div class="slot">${trashIcon}</div><div class="slot">${gridIcon}</div>`;
  }
}

@customElement("app-root")
class AppRoot extends LitElement {
  static styles = [base, css`
    :host { display: grid; grid-template-columns: 1920px 1920px; width: 3840px; height: 1080px; overflow: hidden; background: #03001c; }
    .screen { display: grid; height: 1080px; overflow: hidden; }
    .screen > * { grid-area: 1 / 1; }
    .wall { display: block; }
    .left { display: grid; grid-template-columns: 961px 949px; column-gap: 10px; align-items: start; z-index: 1; }
    .right { display: flex; flex-direction: column; align-items: stretch; z-index: 1; }
    .panel { height: 27px; background: #131313; color: #f2f2f2; display: grid; grid-template-columns: 1fr auto 1fr; align-items: center; padding-right: 12px; }
    .clock { grid-column: 2; white-space: pre; line-height: 25px; padding-left: 12px; font-size: 14px; }
    .tray { display: flex; justify-content: flex-end; align-items: center; line-height: 26px; white-space: nowrap; }
    .i1 { margin-right: 33px; } .i2 { margin-right: 36px; } .i3 { margin-right: 12px; } .i4 { margin-right: 11px; } .i5 { margin-right: 5px; }
    dock-bar { margin: 1px 0 0 432px; }
  `];
  render() {
    return html`
      <div class="screen">${wallpaper("a")}<div class="left"><todoist-window></todoist-window><files-window></files-window></div></div>
      <div class="screen">${wallpaper("b")}
        <div class="right">
          <div class="panel"><span class="clock">Apr 11  10:22</span>
            <div class="tray">
              ${icon(12, 12, svg`<rect width="12" height="12" rx="1" fill="#fff"/><path d="m0 4 2 1.500L8 2M0 6.700l2 1.500 6-3.500M0 9.400l2 1.500 6-3.500" stroke="#222" stroke-width="1.200"/>`, "i1")}
              ${icon(13, 15, svg`<rect x="1" y="3" width="11" height="11.200" rx="1.500" stroke="#eee" stroke-width="1.300"/><path d="M4 1.500h5v3H4z" fill="#eee"/>`, "i2")}
              ${icon(16, 13, svg`<path d="M1 4.500C5 .8 11 .8 15 4.500" stroke="#777" stroke-width="1.300"/><path d="M3.200 7c2.800-2.500 6.800-2.500 9.600 0M5.500 9.500c1.500-1.300 3.500-1.300 5 0" stroke="#ddd" stroke-width="1.300"/><circle cx="8" cy="11.500" r="1" fill="#eee"/>`, "i3")}
              ${icon(17, 14, svg`<path d="M0 4.500h3L7 1v12L3 9.500H0z" fill="#eee"/><path d="M8.500 4.500q1.500 2.500 0 5M10.800 3q2.500 4 0 8M13.300 1.500q3.500 5.500 0 11" stroke="#e4e4e4" stroke-width="1.200"/>`, "i4")}
              ${icon(16, 12, svg`<rect x=".6" y="1" width="12.500" height="10" rx="1.500" stroke="#eee" stroke-width="1.200"/><rect x="2.200" y="2.600" width="9.300" height="6.800" fill="#3f8a12"/><path d="M14.500 4v4" stroke="#eee" stroke-width="1.400"/><path d="M8 2 4 6.500h2.500L6 10l4-4.500H7.500z" fill="#fff"/>`, "i5")}
              <span>93 %</span>
            </div>
          </div>
          <browser-window></browser-window>
          <dock-bar></dock-bar>
        </div>
      </div>`;
  }
}
